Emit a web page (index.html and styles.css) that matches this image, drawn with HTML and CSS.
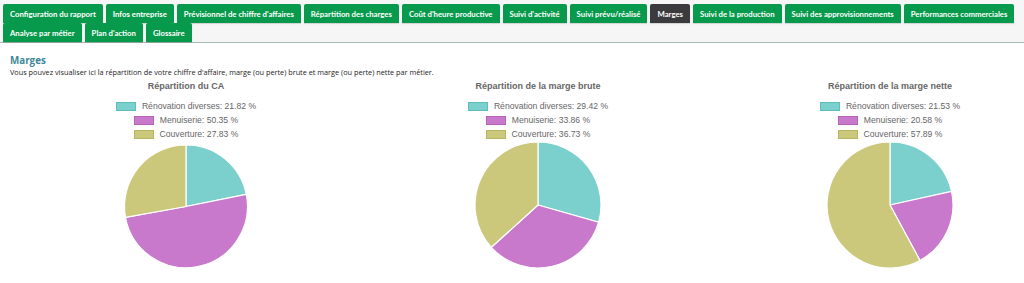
FILE: index.html
```html
<!DOCTYPE html>
<html lang="fr">
  <head>
    <meta charset="UTF-8">
    <meta name="viewport" content="width=device-width, initial-scale=1.0">
    <title>Marges</title>
    <link rel="stylesheet" href="styles.css">
  </head>
  <body>
    <nav class="tabbar">
      <a class="tab" href="#">Configuration du rapport</a>
      <a class="tab" href="#">Infos entreprise</a>
      <a class="tab" href="#">Prévisionnel de chiffre d'affaires</a>
      <a class="tab" href="#">Répartition des charges</a>
      <a class="tab" href="#">Coût d'heure productive</a>
      <a class="tab" href="#">Suivi d'activité</a>
      <a class="tab" href="#">Suivi prévu/réalisé</a>
      <a class="tab tab-active" href="#">Marges</a>
      <a class="tab" href="#">Suivi de la production</a>
      <a class="tab" href="#">Suivi des approvisionnements</a>
      <a class="tab" href="#">Performances commerciales</a>
      <span class="tab-break"></span>
      <a class="tab" href="#">Analyse par métier</a>
      <a class="tab" href="#">Plan d'action</a>
      <a class="tab" href="#">Glossaire</a>
    </nav>

    <main class="content">
      <h2 class="page-title">Marges</h2>
      <p class="page-intro">Vous pouvez visualiser ici la répartition de votre chiffre d'affaire, marge (ou perte) brute et marge (ou perte) nette par métier.</p>

      <div class="charts">
        <!-- CA -->
        <div class="chart">
          <h3 class="chart-title">Répartition du CA</h3>
          <ul class="legend">
            <li><span class="swatch sw-reno"></span>Rénovation diverses: 21.82 %</li>
            <li><span class="swatch sw-menu"></span>Menuiserie: 50.35 %</li>
            <li><span class="swatch sw-couv"></span>Couverture: 27.83 %</li>
          </ul>
          <svg class="pie" viewBox="-65 -65 130 130" width="130" height="130">
            <g transform="translate(0 1.5)">
              <path class="sl-reno" d="M0,0 L0,-61.5 A61.5,61.5 0 0 1 60.28,-12.21 Z"/>
              <path class="sl-menu" d="M0,0 L60.28,-12.21 A61.5,61.5 0 1 1 -60.53,10.88 Z"/>
              <path class="sl-couv" d="M0,0 L-60.53,10.88 A61.5,61.5 0 0 1 0,-61.5 Z"/>
            </g>
          </svg>
        </div>

        <!-- marge brute -->
        <div class="chart">
          <h3 class="chart-title">Répartition de la marge brute</h3>
          <ul class="legend">
            <li><span class="swatch sw-reno"></span>Rénovation diverses: 29.42 %</li>
            <li><span class="swatch sw-menu"></span>Menuiserie: 33.86 %</li>
            <li><span class="swatch sw-couv"></span>Couverture: 36.73 %</li>
          </ul>
          <svg class="pie" viewBox="-65 -65 130 130" width="130" height="130">
            <path class="sl-reno" d="M0,0 L0,-63 A63,63 0 0 1 60.59,17.27 Z"/>
            <path class="sl-menu" d="M0,0 L60.59,17.27 A63,63 0 0 1 -46.68,42.30 Z"/>
            <path class="sl-couv" d="M0,0 L-46.68,42.30 A63,63 0 0 1 0,-63 Z"/>
          </svg>
        </div>

        <!-- marge nette -->
        <div class="chart">
          <h3 class="chart-title">Répartition de la marge nette</h3>
          <ul class="legend">
            <li><span class="swatch sw-reno"></span>Rénovation diverses: 21.53 %</li>
            <li><span class="swatch sw-menu"></span>Menuiserie: 20.58 %</li>
            <li><span class="swatch sw-couv"></span>Couverture: 57.89 %</li>
          </ul>
          <svg class="pie" viewBox="-65 -65 130 130" width="130" height="130">
            <path class="sl-reno" d="M0,0 L0,-63 A63,63 0 0 1 61.51,-13.63 Z"/>
            <path class="sl-menu" d="M0,0 L61.51,-13.63 A63,63 0 0 1 29.96,55.42 Z"/>
            <path class="sl-couv" d="M0,0 L29.96,55.42 A63,63 0 1 1 0,-63 Z"/>
          </svg>
        </div>
      </div>
    </main>
  </body>
</html>
```

FILE: styles.css
```css
html, body { margin: 0; padding: 0; background: #fff; overflow: hidden; }
body { font-family: "Open Sans", "Liberation Sans", sans-serif; color: #222; }
a { text-decoration: none; }

/* onglets */
.tabbar { display: flex; flex-wrap: wrap; gap: 0 3px; padding: 4px 3px 0; height: 38px;
  background: #f6f6f6; border-bottom: 1px solid #a3bdb0; }
.tab { display: flex; align-items: center; height: 19px; padding: 0 7px; border-radius: 2px 2px 0 0;
  background: #089a4c; color: #fff; font-family: Lato, "Open Sans", sans-serif; font-weight: 700;
  font-size: 7.75px; white-space: nowrap; box-shadow: 0 1px 1px rgba(0,0,0,.15); }
.tab-active { background: #3b3a3c; }
.tab-break { flex-basis: 100%; height: 0; }

/* contenu */
.content { padding: 12px 10px 0; }
.page-title { margin: 0; font-size: 9.8px; line-height: 12px; color: #3f8797; font-weight: 700; }
.page-intro { margin: 0; font-size: 7.3px; line-height: 10px; color: #222; }

.charts { display: flex; gap: 92px; padding-left: 46px; margin-top: 3px; }
.chart { flex: 0 0 260px; display: flex; flex-direction: column; align-items: center; }
.chart-title { margin: 0; font-family: "Liberation Sans", Arial, sans-serif; font-size: 9px;
  line-height: 12px; font-weight: 700; color: #666; }
.legend { list-style: none; margin: 7px 0 0; padding: 0; display: flex; flex-direction: column; align-items: center;
  font-family: "Liberation Sans", Arial, sans-serif; font-size: 8.6px; line-height: 14px; color: #666; }
.legend li { display: flex; align-items: center; gap: 6px; }
.swatch { width: 18px; height: 7px; border: 1px solid; }
.sw-reno { background: #7bcfcc; border-color: #5fbdb9; }
.sw-menu { background: #c979cb; border-color: #b862bb; }
.sw-couv { background: #cbc87b; border-color: #b8b562; }

.pie { display: block; margin-top: -1.5px; }
.pie path { stroke: #fff; stroke-width: 1.2; }
.sl-reno { fill: #7bcfcc; }
.sl-menu { fill: #c979cb; }
.sl-couv { fill: #cbc87b; }
```
